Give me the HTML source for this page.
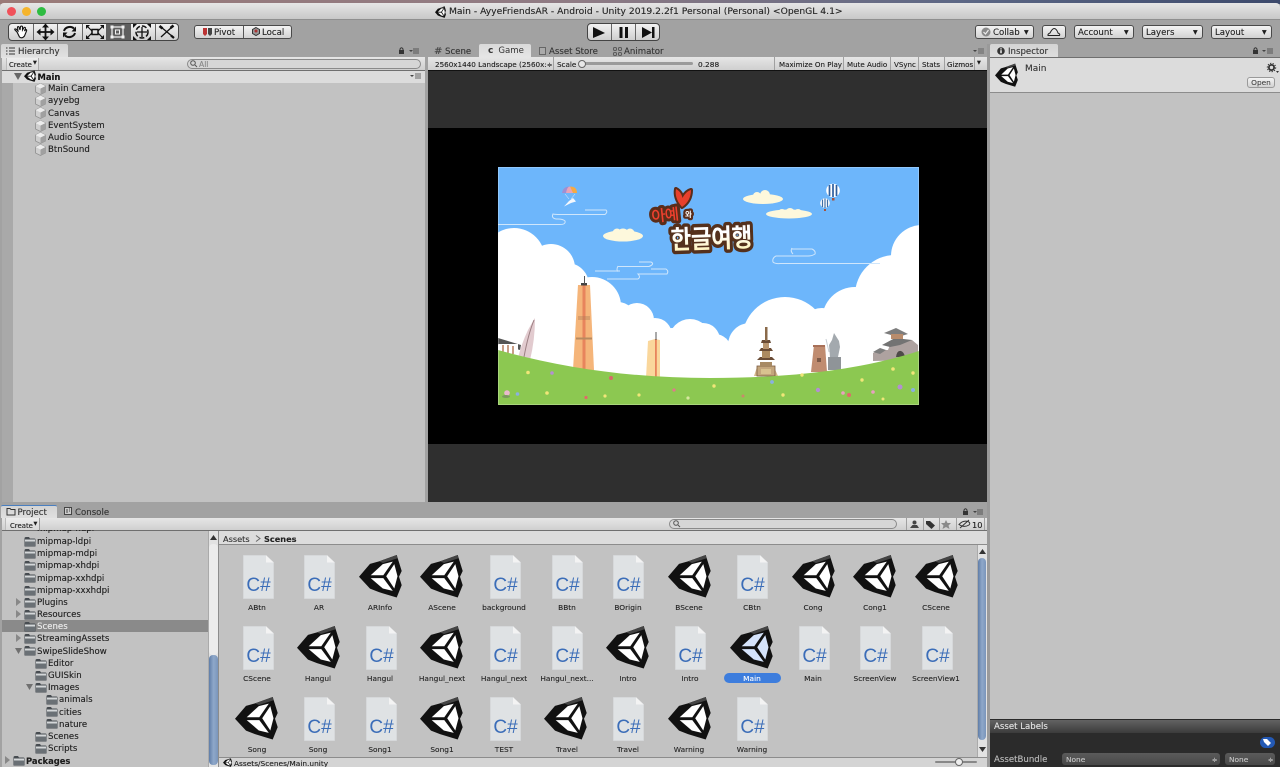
<!DOCTYPE html>
<html><head><meta charset="utf-8"><title>Main - AyyeFriendsAR - Unity</title>
<style>
html,body{margin:0;padding:0;width:1280px;height:767px;overflow:hidden;background:#a2a2a2}
#r{position:absolute;left:0;top:0;width:1280px;height:767px;overflow:hidden;background:#a2a2a2;font-family:"DejaVu Sans","Liberation Sans",sans-serif;color:#222;filter:blur(.3px)}
.b{position:absolute;box-sizing:border-box}
.t{position:absolute;white-space:nowrap;font-size:8.6px;line-height:12px;height:12px;color:#1c1c1c;margin-top:1px;-webkit-text-stroke:.12px currentColor}
.c{position:absolute;white-space:nowrap;font-size:7.4px;line-height:10px;color:#222;transform:translateX(-50%);margin-top:1px;-webkit-text-stroke:.1px currentColor}
.bar{background:linear-gradient(#e6e6e6,#cfcfcf);border-bottom:1px solid #6f6f6f}
.btn{position:absolute;box-sizing:border-box;background:linear-gradient(#f4f4f4,#d2d2d2);border:1px solid #4a4a4a;border-radius:3px;font-size:8.6px;line-height:11px;height:13px;color:#222;white-space:nowrap}
.tab{position:absolute;top:44px;height:14px;background:linear-gradient(#d4d4d4,#e2e2e2);border-radius:2px 2px 0 0;font-size:8.6px;line-height:15px;color:#333;box-sizing:border-box}
.tn{position:absolute;top:45px;font-size:8.6px;line-height:14px;color:#333;white-space:nowrap;-webkit-text-stroke:.12px currentColor}
.sep{position:absolute;width:1px;background:#a0a0a0}
svg{position:absolute;overflow:visible}
</style></head><body><div id="r">
<svg width="0" height="0" style="left:0;top:0"><defs>
<symbol id="u" viewBox="0 0 43 41.500" preserveAspectRatio="none"><path fill="#111" d="M0 21.500L11 9.300 20 7 37.700 1 42.700 16 40 21.500 42.700 29.300 37.700 41 20 36 11 32.700Z"/><path fill="#444" d="M20 7L37.700 1 38.500 4 24 8.500Z"/><path fill="#fff" d="M11.700 20L23.800 9.500 33.800 7.200 24.300 20ZM11.700 22.700H24.300L33.800 34.800 23.800 32.500ZM35.300 9.500L38.500 21 35.300 32.500 27.200 21Z"/></symbol>
<symbol id="us" viewBox="0 0 43 41.500" preserveAspectRatio="none"><path fill="#111" d="M0 21.500L11 9.300 20 7 37.700 1 42.700 16 40 21.500 42.700 29.300 37.700 41 20 36 11 32.700Z"/><path fill="#444" d="M20 7L37.700 1 38.500 4 24 8.500Z"/><path fill="#d5e3fb" d="M11.700 20L23.800 9.500 33.800 7.200 24.300 20ZM11.700 22.700H24.300L33.800 34.800 23.800 32.500ZM35.300 9.500L38.500 21 35.300 32.500 27.200 21Z"/></symbol>
<symbol id="d" viewBox="0 0 31 44"><path fill="#dfe2e4" stroke="#d0d2d4" stroke-width=".6" d="M.3.3H23L30.700 7.500V43.700H.3Z"/><path fill="#f3f3f3" d="M23 .3V7.500H30.700Z"/></symbol>
<symbol id="f" viewBox="0 0 12 11"><path fill="#474c51" d="M.5 2.500Q.5 1 2 1H5L6 2.500H10.500Q11.500 2.500 11.500 3.500V10.500H.5Z"/><path fill="#d4d7d9" d="M1 3.500H11V5.500H1Z"/><path fill="#6a7075" d="M1 5.500H11V10H1Z"/></symbol>
<symbol id="g" viewBox="0 0 10 11"><path fill="#cfcfcf" stroke="#8c8c8c" stroke-width=".7" d="M5 .5L9.500 2.700V8.300L5 10.500 .5 8.300V2.700Z"/><path fill="#a0a0a0" d="M5 5L9.500 2.700V8.300L5 10.500Z"/><path fill="#ececec" d="M5 .5L9.500 2.700 5 5 .5 2.700Z"/></symbol>
<linearGradient id="lg" x1="0" y1="0" x2="0" y2="1"><stop offset=".45" stop-color="#fff"/><stop offset="1" stop-color="#fff0a8"/></linearGradient>
</defs></svg>

<!-- desktop strip and title bar -->
<div class="b" style="left:0;top:0;width:1280px;height:4px;background:linear-gradient(90deg,#9a7a78 0,#8f7b84 45%,#5c6785 75%,#3d4a6c 100%)"></div>
<div class="b" style="left:0;top:3px;width:1280px;height:17px;background:linear-gradient(#e6e6e6,#c8c8c8);border-radius:4px 4px 0 0;border-bottom:1px solid #8f8f8f"></div>
<div class="b" style="left:7px;top:7px;width:9px;height:9px;border-radius:50%;background:#f0515a"></div>
<div class="b" style="left:22px;top:7px;width:9px;height:9px;border-radius:50%;background:#f5b42c"></div>
<div class="b" style="left:37px;top:7px;width:9px;height:9px;border-radius:50%;background:#2ebc41"></div>
<svg style="left:435px;top:6px" width="11" height="12"><use href="#u" width="11" height="12"/></svg>
<div class="t" style="left:449px;top:5px;font-size:9.2px;color:#222">Main - AyyeFriendsAR - Android - Unity 2019.2.2f1 Personal (Personal) &lt;OpenGL 4.1&gt;</div>

<!-- tool buttons -->
<div class="b" style="left:8px;top:23px;width:171px;height:18px;border:1px solid #444;border-radius:4px;background:linear-gradient(#f2f2f2,#cfcfcf)"></div>
<div class="b" style="left:106px;top:24px;width:25px;height:16px;background:#5e5e5e"></div>
<div class="sep" style="left:33px;top:24px;height:16px;background:#666"></div><div class="sep" style="left:57px;top:24px;height:16px;background:#666"></div><div class="sep" style="left:82px;top:24px;height:16px;background:#666"></div><div class="sep" style="left:155px;top:24px;height:16px;background:#666"></div>
<svg style="left:8px;top:23px" width="172" height="18" fill="none" stroke="#111">
<path stroke-width="1.100" fill="#fff" d="M9 9L7 7Q6 5.500 8 6L10 8 9.500 4Q10 3 11 4L12 7 12.500 3.500Q13.500 2.500 14.500 3.500L14.500 7 16 4.500Q17 4 17.500 5L16.500 8 18 6.500Q19 6.500 18.500 8L16.500 13Q14 16 11.500 14Z"/>
<path stroke-width="1.800" d="M30 9H45M37.500 2V16"/><path fill="#111" stroke="none" d="M37.500 0.500L41 4.500H34ZM37.500 17.500L41 13.500H34ZM28.500 9L32.500 5.500V12.500ZM46.500 9L42.500 5.500V12.500Z"/>
<path stroke-width="2" d="M56 8A6 5.500 0 0 1 66 5.500M67 10A6 5.500 0 0 1 57 12.500"/><path fill="#111" stroke="none" d="M68 3.500V8.500H63.500ZM55 14.500V9.500H59.500Z"/>
<path stroke-width="1.200" d="M79 3L84 8M95 3L90 8M79 15L84 10M95 15L90 10"/><rect x="84" y="6.500" width="6" height="5" stroke-width="1.500"/><path fill="#111" stroke="none" d="M78 2H82L78 6ZM96 2H92L96 6ZM78 16H82L78 12ZM96 16H92L96 12Z"/>
<rect x="104" y="4" width="11" height="10" stroke="#f2f2f2" stroke-width="1.200"/><rect x="102.500" y="2.500" width="3" height="3" fill="#f2f2f2" stroke="none"/><rect x="113.500" y="2.500" width="3" height="3" fill="#f2f2f2" stroke="none"/><rect x="102.500" y="12.500" width="3" height="3" fill="#f2f2f2" stroke="none"/><rect x="113.500" y="12.500" width="3" height="3" fill="#f2f2f2" stroke="none"/><rect x="107.500" y="7" width="4" height="4" stroke="#f2f2f2"/>
<circle cx="134" cy="9" r="6" stroke-width="1.500" stroke-dasharray="5 2"/><path stroke-width="1.300" d="M129 9H139M134 4V14"/><path fill="#111" stroke="none" d="M125 1H129L125 5ZM143 1H139L143 5ZM125 17H129L125 13ZM143 17H139L143 13Z"/>
<path stroke-width="1.300" d="M153 4L165 14M164 4L153 14"/><path stroke-width="2.600" d="M151.500 3L154.500 5.500M162.500 5L165.500 2.500"/><path stroke-width="2.200" d="M163 12.500L166 15"/>
</svg>
<!-- pivot/local -->
<div class="btn" style="left:194px;top:25px;width:98px;height:14px;border-radius:3px"></div>
<div class="sep" style="left:243px;top:26px;height:12px;background:#555"></div>
<svg style="left:203px;top:28px" width="9" height="8"><path fill="#b33" d="M0 0H4V6L2 8 0 6Z"/><path fill="#444" d="M5 0H9V6L7 8 5 6Z"/></svg>
<div class="t" style="left:214px;top:25.500px;color:#222">Pivot</div>
<svg style="left:252px;top:27px" width="8" height="9"><path fill="#999" stroke="#333" d="M4 .5L7.500 2.500V6.500L4 8.500 .5 6.500V2.500Z"/><circle cx="4" cy="4" r="1.500" fill="#a33"/></svg>
<div class="t" style="left:262px;top:25.500px;color:#222">Local</div>
<!-- play -->
<div class="b" style="left:587px;top:23px;width:73px;height:18px;border:1px solid #444;border-radius:4px;background:linear-gradient(#f2f2f2,#cfcfcf)"></div>
<div class="sep" style="left:611px;top:24px;height:16px;background:#666"></div><div class="sep" style="left:635px;top:24px;height:16px;background:#666"></div>
<svg style="left:587px;top:23px" width="73" height="18" fill="#111"><path d="M6 4L18 10 6 15Z"/><rect x="32.500" y="4" width="3" height="11"/><rect x="38" y="4" width="3" height="11"/><path d="M55 4L65 9.500 55 15Z"/><rect x="65" y="4" width="2.500" height="11"/></svg>
<!-- right top buttons -->
<div class="btn" style="left:975px;top:25px;width:59px;height:14px"></div>
<svg style="left:981px;top:27px" width="10" height="10"><circle cx="5" cy="5" r="4.500" fill="#8a8a8a"/><path d="M2.500 5L4.500 7 7.500 3" fill="none" stroke="#eee" stroke-width="1.200"/></svg>
<div class="t" style="left:993px;top:25.500px;color:#222">Collab</div><div class="t" style="left:1024px;top:25.500px;font-size:6px">▼</div>
<div class="btn" style="left:1042px;top:25px;width:24px;height:14px"></div>
<svg style="left:1047px;top:28px" width="14" height="8"><path fill="none" stroke="#222" d="M1 7.500H12.500Q13.500 6 11 5Q9.500 .5 7 .5Q5 1 3 5Q.5 6 1 7.500Z"/></svg>
<div class="btn" style="left:1074px;top:25px;width:60px;height:14px"></div><div class="t" style="left:1078px;top:25.500px;color:#222">Account</div><div class="t" style="left:1124px;top:25.500px;font-size:6px">▼</div>
<div class="btn" style="left:1142px;top:25px;width:61px;height:14px"></div><div class="t" style="left:1146px;top:25.500px;color:#222">Layers</div><div class="t" style="left:1193px;top:25.500px;font-size:6px">▼</div>
<div class="btn" style="left:1211px;top:25px;width:61px;height:14px"></div><div class="t" style="left:1215px;top:25.500px;color:#222">Layout</div><div class="t" style="left:1262px;top:25.500px;font-size:6px">▼</div>

<!-- hierarchy -->
<div class="tab" style="left:1px;width:67px"></div>
<svg style="left:6px;top:47px" width="9" height="8" stroke="#333"><path d="M3 1H9M3 4H9M3 7H9M0 1H1.500M0 4H1.500M0 7H1.500"/></svg>
<div class="t" style="left:18px;top:45px;color:#333">Hierarchy</div>
<svg style="left:399px;top:47px" width="20" height="8"><rect x="0" y="3" width="5" height="4" fill="#333"/><path d="M1 3V2Q2.500 -.5 4 2V3" fill="none" stroke="#333"/><path d="M10 3H14L12 5Z" fill="#444"/><path d="M14 2H20M14 4H20M14 6H20" stroke="#555"/></svg>
<div class="b bar" style="left:2px;top:57px;width:423px;height:14px"></div>
<div class="b" style="left:6px;top:58px;width:33px;height:12px;border-right:1px solid #aaa;border-left:1px solid #bbb;background:linear-gradient(#eee,#d8d8d8)"></div>
<div class="t" style="left:9px;top:57.500px;font-size:6.900px">Create</div><div class="t" style="left:33px;top:56px;font-size:5px">▼</div>
<div class="b" style="left:187px;top:59px;width:234px;height:10px;border:1px solid #8a8a8a;border-radius:5px;background:#d6d6d6"></div>
<svg style="left:190px;top:60px" width="9" height="8" fill="none" stroke="#555"><circle cx="3" cy="3" r="2.300"/><path d="M5 5L7 7"/></svg>
<div class="t" style="left:199px;top:57.500px;font-size:7.600px;color:#888">All</div>
<div class="b" style="left:2px;top:71px;width:423px;height:431px;background:#c2c2c2"></div>
<div class="b" style="left:2px;top:82px;width:11px;height:420px;background:#a9a9a9"></div>
<div class="b" style="left:2px;top:71px;width:423px;height:12px;background:#dcdcdc"></div>
<svg style="left:14px;top:73px" width="8" height="7"><path d="M0 0H8L4 7Z" fill="#666"/></svg>
<svg style="left:24px;top:70px" width="12" height="12"><use href="#u" width="12" height="12"/></svg>
<div class="t" style="left:37.500px;top:69.500px;font-weight:bold;font-size:8.400px;color:#111">Main</div>
<svg style="left:410px;top:73px" width="12" height="7"><path d="M0 2H4L2 4Z" fill="#444"/><path d="M5 1H11M5 3H11M5 5H11" stroke="#666"/></svg>
<svg style="left:35px;top:83px" width="11" height="74"><use href="#g" y="0" width="11" height="12"/><use href="#g" y="12" width="11" height="12"/><use href="#g" y="24" width="11" height="12"/><use href="#g" y="37" width="11" height="12"/><use href="#g" y="49" width="11" height="12"/><use href="#g" y="61" width="11" height="12"/></svg>
<div class="t" style="left:48px;top:82px">Main Camera</div>
<div class="t" style="left:48px;top:94px">ayyebg</div>
<div class="t" style="left:48px;top:106.500px">Canvas</div>
<div class="t" style="left:48px;top:119px">EventSystem</div>
<div class="t" style="left:48px;top:131px">Audio Source</div>
<div class="t" style="left:48px;top:143px">BtnSound</div>

<!-- center tabs -->
<div class="tn" style="left:434px"><span style="font-size:10px;line-height:10px;color:#444">#</span></div><div class="tn" style="left:445px">Scene</div>
<div class="tab" style="left:479px;width:52px;padding-left:9px;background:linear-gradient(#dadada,#e6e6e6)"><b style="font-size:9px;color:#333">c</b><span style="margin-left:5px">Game</span></div>
<div class="b" style="left:539px;top:47px;width:7px;height:8px;border:1px solid #666;background:#aaa"></div><div class="tn" style="left:549px">Asset Store</div>
<svg style="left:613px;top:47px" width="9" height="9" fill="#999" stroke="#444" stroke-width=".7"><circle cx="2" cy="2" r="1.700"/><circle cx="7" cy="2" r="1.700"/><circle cx="2" cy="7" r="1.700"/><circle cx="7" cy="7" r="1.700"/></svg><div class="tn" style="left:624px">Animator</div>
<svg style="left:973px;top:48px" width="11" height="7"><path d="M0 2H4L2 4Z" fill="#444"/><path d="M5 1H11M5 3H11M5 5H11" stroke="#666"/></svg>
<div class="b bar" style="left:428px;top:57px;width:559px;height:13px;border-bottom:none"></div>
<div class="t" style="left:435px;top:57.500px;font-size:7.200px">2560x1440 Landscape (2560x:</div><div class="t" style="left:547px;top:57.500px;font-size:6.500px">≑</div>
<div class="sep" style="left:553px;top:57px;height:13px"></div>
<div class="t" style="left:557px;top:57.500px;font-size:7.200px">Scale</div>
<div class="b" style="left:583px;top:62px;width:110px;height:3px;background:#9a9a9a;border-radius:2px"></div>
<div class="b" style="left:578px;top:60px;width:8px;height:8px;border-radius:50%;border:1px solid #666;background:#e8e8e8"></div>
<div class="t" style="left:698px;top:57.500px;font-size:7.400px">0.288</div>
<div class="sep" style="left:774px;top:57px;height:13px"></div><div class="t" style="left:779px;top:57.500px;font-size:7.100px">Maximize On Play</div>
<div class="sep" style="left:843px;top:57px;height:13px"></div><div class="t" style="left:847px;top:57.500px;font-size:7.100px">Mute Audio</div>
<div class="sep" style="left:890px;top:57px;height:13px"></div><div class="t" style="left:894px;top:57.500px;font-size:7.100px">VSync</div>
<div class="sep" style="left:918px;top:57px;height:13px"></div><div class="t" style="left:922px;top:57.500px;font-size:7.100px">Stats</div>
<div class="sep" style="left:944px;top:57px;height:13px"></div><div class="t" style="left:947px;top:57.500px;font-size:7.100px">Gizmos</div>
<div class="sep" style="left:974px;top:57px;height:13px"></div><div class="t" style="left:977px;top:56px;font-size:5px">▼</div>

<!-- game view -->
<div class="b" style="left:428px;top:70px;width:559px;height:432px;background:#2f2f2f;border-top:1px solid #111"></div>
<div class="b" style="left:428px;top:128px;width:559px;height:316px;background:#000"></div>
<svg style="left:0;top:0" width="1280" height="767" viewBox="0 0 1280 767">
<defs><clipPath id="cp"><rect x="498" y="167" width="421" height="238"/></clipPath></defs>
<g clip-path="url(#cp)">
<rect x="498" y="167" width="421" height="238" fill="#6db6fb"/>
<g fill="#fff"><circle cx="514" cy="259" r="31"/><circle cx="535" cy="268" r="22"/><circle cx="551" cy="268" r="24"/><circle cx="567" cy="285" r="22"/><circle cx="592" cy="306" r="29"/><circle cx="618" cy="320" r="18"/><circle cx="637" cy="320" r="17"/><circle cx="655" cy="335" r="17"/><circle cx="672" cy="342" r="14"/><circle cx="690" cy="340" r="21"/><circle cx="703" cy="340" r="17"/><circle cx="715" cy="350" r="16"/><circle cx="750" cy="345" r="22"/><circle cx="785" cy="340" r="43"/><circle cx="822" cy="330" r="22"/><circle cx="855" cy="320" r="33"/><circle cx="895" cy="295" r="40"/><circle cx="922" cy="256" r="31"/>
<path d="M498 250L540 262 570 290 600 310 640 335 700 345 722 348 780 330 850 310 885 290 919 250V380H498Z"/></g>
<g fill="none" stroke="#cfe6fb" stroke-width="1"><path d="M498 224.500H560Q566 224.500 565 221Q563 219 558 219H556Q551 218 553 214Q555 214.500 560 214.500H605Q608 212 606 210H585"/><path d="M595 271H620M618 266.500H649Q655 264 651 262H639M618 266Q616 270 618 271.500M630 279H638Q641 277 638 274H667Q669 271 666 269H651M607 279H638"/><path d="M792 249H812Q816 251 815 254Q812 256 808 256H776Q772 258 773 262Q775 264 780 263.500H880M792 248Q790 251 793 254"/></g>
<g fill="#fdf8dc"><ellipse cx="623" cy="236" rx="20" ry="5.500"/><circle cx="617" cy="233" r="4.500"/><circle cx="623" cy="235" r="6.500"/><circle cx="630" cy="233" r="4.500"/>
<ellipse cx="763" cy="199" rx="20" ry="5"/><circle cx="757" cy="196" r="4"/><circle cx="765" cy="195" r="5"/><ellipse cx="789" cy="214" rx="23" ry="4.500"/><circle cx="782" cy="213" r="4"/><circle cx="790" cy="213" r="5"/><circle cx="798" cy="213" r="4"/></g>
<!-- balloons -->
<circle cx="833" cy="190.500" r="6.800" fill="#fff"/><path d="M829.500 185V196M833 184V197M836.500 185V196" stroke="#2e5f9f" stroke-width="1.700"/><rect x="832" y="198" width="2.500" height="2.500" fill="#a5533c"/>
<circle cx="825" cy="203" r="4.800" fill="#fff"/><path d="M822.500 199.500V207M825 198.500V208M827.500 199.500V207" stroke="#3f6ea6" stroke-width="1.200"/><rect x="824" y="209" width="2" height="2" fill="#a5533c"/>
<path d="M562 193Q563 186.500 570 186.500V193Z" fill="#9f8fd2"/><path d="M566 193Q567 186.500 570 186.500L574 193Z" fill="#e9a4b8"/><path d="M570 186.500Q577 186.500 577 193H573Z" fill="#f4aa45"/>
<path d="M564 206.500L569 201 573 198 576 201.500 571 203Z" fill="#f4f8fd"/><path d="M565 194L569 199M575 194L571 199" stroke="#e8f0fb" stroke-width=".5"/>
<!-- hill buildings -->
<path d="M518 358Q521 345 528 330Q533 321 535 318Q535 340 530 360Z" fill="#e2cbcf"/><path d="M524 357Q528 335 534 320" stroke="#9b7e82" fill="none"/>
<path d="M498 338L521 345 520 350 498 344Z" fill="#555"/><rect x="499" y="344" width="19" height="8" fill="#fff"/><path d="M503 345V352M508 345V353M513 346V354" stroke="#a55d35" stroke-width="1.200"/>
<path d="M578 285H590L594 370H573Z" fill="#f5b57a"/><rect x="582.500" y="285" width="3" height="85" fill="#e8845c"/><rect x="581" y="283" width="6" height="2.500" fill="#444"/><rect x="584" y="276" width="1" height="8" fill="#555"/><path d="M578 317H590M578 319H590" stroke="#a77a55" stroke-width=".8"/><path d="M576 338.500H592" stroke="#b88a60" stroke-width="2"/>
<path d="M648 341L655 339 660 340V378H646Z" fill="#fad79c"/><rect x="655" y="339" width="1.800" height="39" fill="#e8845c"/><rect x="655.500" y="332" width="1" height="8" fill="#555"/>
<path d="M754 376L757 367H774L778 376Z" fill="#d6b88c"/><rect x="757" y="366" width="18" height="10" fill="#c4a67d" stroke="#7a5a40" stroke-width=".8"/><rect x="761" y="369" width="10" height="5" fill="#d9c290"/><path d="M760 357H772L775 360H757Z" fill="#6a4c36"/><rect x="762" y="350" width="8" height="8" fill="#ac8a60"/><path d="M761 348H771L773 351H759Z" fill="#6a4c36"/><rect x="763" y="343" width="6" height="6" fill="#b99670"/><path d="M762 340H770L771 343H761Z" fill="#6a4c36"/><rect x="765" y="327" width="2.500" height="14" fill="#8a6a4a"/><rect x="760" y="362" width="12" height="4" fill="#a88a64"/>
<path d="M814 345H825L827 372H811Z" fill="#c08c70"/><rect x="817" y="358" width="4" height="4" fill="#7d5a48"/><rect x="813" y="345" width="12" height="2" fill="#a87058"/>
<rect x="828" y="357" width="13" height="13" fill="#8f9498"/><path d="M834 333L839 341 840 347 838 357H830L829 345 832 340Z" fill="#a3a9ae"/><path d="M826 339L829 352" stroke="#c8cdd2" stroke-width="1"/>
<path d="M873 361V353L882 350H888L892 340H912L918 345V360Z" fill="#aea2a0"/><path d="M884 333L896 328 908 334 898 337Z" fill="#7d7d7d"/><path d="M882 345L895 338 912 340 900 345 890 347Z" fill="#737373"/><path d="M873 352L880 348 886 350 880 354Z" fill="#7d7d7d"/><path d="M896 357Q897 350 901 351 904 352 905 357Z" fill="#4e4a48"/><rect x="891" y="334" width="12" height="5" fill="#b98c6c"/>
<path d="M498 350C570 370 640 378 710 378C790 378 860 370 919 351V405H498Z" fill="#8cc851"/>
<g><circle cx="507" cy="393" r="2.800" fill="#e9b9cc"/><ellipse cx="506" cy="396.500" rx="4" ry="1.500" fill="#7a9a5c"/><circle cx="517.500" cy="394" r="1.800" fill="#8ab0e0"/><circle cx="528" cy="372.500" r="1.800" fill="#f1e678"/><circle cx="552" cy="373" r="1.800" fill="#b48fd2"/><circle cx="547" cy="393" r="1.800" fill="#f1e678"/><circle cx="586" cy="397.500" r="1.600" fill="#e06a6a"/><circle cx="611" cy="378" r="2" fill="#d66a6a"/><circle cx="605" cy="396" r="1.600" fill="#f1e678"/><circle cx="639" cy="395" r="1.600" fill="#f1e678"/><circle cx="674" cy="390" r="1.600" fill="#e07a8a"/><circle cx="688" cy="398" r="1.600" fill="#d8e8a0"/><circle cx="714" cy="386" r="1.700" fill="#f1e678"/><circle cx="743" cy="396" r="1.500" fill="#c98a6a"/><circle cx="772" cy="382" r="1.900" fill="#8ab0e0"/><circle cx="783" cy="395" r="1.700" fill="#f1e678"/><circle cx="802" cy="375" r="1.700" fill="#f1e678"/><circle cx="818" cy="390" r="2.200" fill="#b48fd2"/><circle cx="843" cy="393" r="1.800" fill="#e9a0c0"/><circle cx="849" cy="395" r="2" fill="#e06a6a"/><circle cx="862" cy="380" r="1.700" fill="#f1e678"/><circle cx="873" cy="392" r="1.800" fill="#e9a0c0"/><circle cx="883" cy="399" r="1.500" fill="#f1e678"/><circle cx="893" cy="369" r="1.800" fill="#f1e678"/><circle cx="900" cy="387" r="2.500" fill="#b48fd2"/><circle cx="913" cy="373" r="1.700" fill="#f1e678"/><circle cx="913" cy="390" r="2" fill="#8ab0e0"/></g>
<!-- logo -->
<path d="M682 207C676 200 675 194 676 189C680 191 682 195 682.500 198C684 195 687 191 691 190C691 197 688 203 682 207Z" fill="#e8402c" stroke="#5a2d1a" stroke-width="4" stroke-linejoin="round" paint-order="stroke"/>
<g font-family="'Noto Sans CJK KR','NanumGothic',sans-serif" stroke-linejoin="round">
<text transform="translate(652 222) rotate(-6)" font-size="15.500" font-weight="500" fill="#f0402e" stroke="#5a2d1a" stroke-width="6" paint-order="stroke" style="letter-spacing:-.8px">아예</text>
<text x="685" y="217" font-size="7.500" font-weight="700" fill="#fff" stroke="#5a2d1a" stroke-width="4.500" paint-order="stroke">와</text>
<text transform="translate(671 249) rotate(-2) scale(1 1.150)" font-size="22.500" font-weight="700" fill="url(#lg)" stroke="#54301c" stroke-width="6" paint-order="stroke" style="letter-spacing:-.4px">한글여행</text>
</g>
<rect x="498.500" y="167.500" width="420" height="237" fill="none" stroke="#fff" stroke-opacity=".25"/>
</g></svg>

<!-- inspector -->
<div class="tab" style="left:990px;width:68px;background:linear-gradient(#d4d4d4,#dedede)"></div>
<svg style="left:997px;top:47px" width="8" height="8"><circle cx="4" cy="4" r="3.800" fill="#333"/><rect x="3.300" y="3.200" width="1.400" height="3" fill="#fff"/><rect x="3.300" y="1.300" width="1.400" height="1.200" fill="#fff"/></svg>
<div class="t" style="left:1008px;top:45px;color:#333">Inspector</div>
<svg style="left:1253px;top:47px" width="20" height="8"><rect x="0" y="3" width="5" height="4" fill="#333"/><path d="M1 3V2Q2.500 -.5 4 2V3" fill="none" stroke="#333"/><path d="M9 3H13L11 5Z" fill="#444"/><path d="M14 2H20M14 4H20M14 6H20" stroke="#555"/></svg>
<div class="b" style="left:990px;top:57px;width:290px;height:710px;background:#c2c2c2;border-top:1px solid #6f6f6f"></div>
<div class="b" style="left:990px;top:58px;width:290px;height:35px;background:#dcdcdc;border-bottom:1px solid #8c8c8c"></div>
<svg style="left:995px;top:63px" width="23" height="24"><use href="#u" width="23" height="24"/></svg>
<div class="t" style="left:1025px;top:62px;color:#333;font-size:9px">Main</div>
<svg style="left:1267px;top:63px" width="12" height="10"><circle cx="4.500" cy="4.500" r="2.600" fill="none" stroke="#333" stroke-width="1.800"/><circle cx="4.500" cy="4.500" r="4.200" fill="none" stroke="#333" stroke-width="1" stroke-dasharray="1.300 1.300"/><path d="M9 8H12L10.500 10Z" fill="#333"/></svg>
<div class="btn" style="left:1247px;top:77px;width:28px;height:11px;font-size:7.400px;line-height:10.500px;text-align:center;border-color:#9a9a9a;color:#333">Open</div>
<div class="b" style="left:990px;top:719px;width:290px;height:14px;background:linear-gradient(#636363,#3c3c3c);border-top:1px solid #2a2a2a"></div>
<div class="t" style="left:994px;top:720px;color:#e4e4e4;font-size:8.600px">Asset Labels</div>
<div class="b" style="left:990px;top:733px;width:290px;height:34px;background:#2b2b2b"></div>
<div class="b" style="left:1260px;top:737px;width:15px;height:11px;border-radius:6px;background:#2359b5"></div>
<svg style="left:1263px;top:738px" width="9" height="9"><path d="M0 1H4L8 5 5 8 1 4Z" fill="#fff"/></svg>
<div class="t" style="left:994px;top:753px;color:#bdbdbd;font-size:8.600px">AssetBundle</div>
<div class="b" style="left:1062px;top:753px;width:158px;height:12px;background:linear-gradient(#5a5a5a,#484848);border-radius:3px"></div><div class="t" style="left:1066px;top:752.500px;color:#c8c8c8;font-size:7.400px">None</div><div class="t" style="left:1212px;top:752.500px;color:#c8c8c8;font-size:6.500px">≑</div>
<div class="b" style="left:1225px;top:753px;width:50px;height:12px;background:linear-gradient(#5a5a5a,#484848);border-radius:3px"></div><div class="t" style="left:1229px;top:752.500px;color:#c8c8c8;font-size:7.400px">None</div><div class="t" style="left:1268px;top:752.500px;color:#c8c8c8;font-size:6.500px">≑</div>
<div class="b" style="left:987px;top:44px;width:3px;height:723px;background:#9a9a9a"></div>

<!-- project panel -->
<div class="b" style="left:0;top:502px;width:987px;height:3px;background:#a2a2a2"></div>
<div class="b" style="left:0;top:505px;width:987px;height:13px;background:#a2a2a2"></div>
<div class="tab" style="left:1px;top:505px;width:56px;height:13px;border-top:1px solid #4a7fc0;background:linear-gradient(#d4d4d4,#e0e0e0)"></div>
<svg style="left:7px;top:507px" width="8" height="8"><path d="M0 1.500H3L4 2.500H8V8H0Z" fill="none" stroke="#333"/></svg>
<div class="t" style="left:17.500px;top:506px;color:#333">Project</div>
<svg style="left:64px;top:507px" width="8" height="8"><rect x=".5" y=".5" width="7" height="7" fill="#ccc" stroke="#444"/><path d="M3 2V6M5 2H6M5 4H6" stroke="#444"/></svg>
<div class="t" style="left:75px;top:506px;color:#333">Console</div>
<svg style="left:963px;top:508px" width="20" height="8"><rect x="0" y="3" width="5" height="4" fill="#333"/><path d="M1 3V2Q2.500 -.5 4 2V3" fill="none" stroke="#333"/><path d="M10 3H14L12 5Z" fill="#444"/><path d="M14 2H20M14 4H20M14 6H20" stroke="#555"/></svg>
<div class="b bar" style="left:2px;top:518px;width:985px;height:13px"></div>
<div class="b" style="left:5px;top:518px;width:35px;height:12px;background:linear-gradient(#eee,#d8d8d8);border-right:1px solid #999;border-left:1px solid #bbb"></div>
<div class="t" style="left:10px;top:518.500px;font-size:6.900px">Create</div><div class="t" style="left:33.500px;top:517px;font-size:5px">▼</div>
<div class="b" style="left:669px;top:519px;width:228px;height:10px;border:1px solid #8a8a8a;border-radius:5px;background:#d6d6d6"></div>
<svg style="left:673px;top:520px" width="9" height="8" fill="none" stroke="#555"><circle cx="3" cy="3" r="2.300"/><path d="M5 5L7 7"/></svg>
<div class="sep" style="left:906px;top:518px;height:12px"></div><div class="sep" style="left:923px;top:518px;height:12px"></div><div class="sep" style="left:939px;top:518px;height:12px"></div><div class="sep" style="left:956px;top:518px;height:12px"></div><div class="sep" style="left:984px;top:518px;height:12px"></div>
<svg style="left:909px;top:520px" width="75" height="9"><circle cx="5.500" cy="2.500" r="2" fill="#444"/><path d="M1 8L3.500 5H8L10 8Z" fill="#444"/><path d="M17 1H21L26 5.500 22.500 9 17 4Z" fill="#333"/><path d="M37 0L38.500 3H42L39.500 5.500 40.500 9 37 7 33.500 9 34.500 5.500 32 3H35.500Z" fill="#8a8a8a"/><path d="M50 4.500Q54 0 59 1.500Q62 3 60 5Q55 8 50 4.500ZM51 8L60 0" fill="none" stroke="#333"/></svg>
<div class="t" style="left:972px;top:517.500px;font-size:8.200px">10</div>

<!-- tree -->
<div class="b" style="left:2px;top:531px;width:206px;height:236px;background:#c2c2c2"></div>
<div class="b" style="left:2px;top:620px;width:206px;height:12px;background:#8a8a8a"></div>
<svg style="left:0;top:0" width="240" height="767">
<use href="#f" x="24" y="536" width="12" height="11"/><use href="#f" x="24" y="548" width="12" height="11"/><use href="#f" x="24" y="560" width="12" height="11"/><use href="#f" x="24" y="572" width="12" height="11"/><use href="#f" x="24" y="585" width="12" height="11"/><use href="#f" x="24" y="597" width="12" height="11"/><use href="#f" x="24" y="609" width="12" height="11"/><use href="#f" x="24" y="621" width="12" height="11"/><use href="#f" x="24" y="633" width="12" height="11"/><use href="#f" x="24" y="645" width="12" height="11"/>
<use href="#f" x="35" y="658" width="12" height="11"/><use href="#f" x="35" y="670" width="12" height="11"/><use href="#f" x="35" y="682" width="12" height="11"/><use href="#f" x="46" y="694" width="12" height="11"/><use href="#f" x="46" y="706" width="12" height="11"/><use href="#f" x="46" y="718" width="12" height="11"/><use href="#f" x="35" y="731" width="12" height="11"/><use href="#f" x="35" y="743" width="12" height="11"/><use href="#f" x="13" y="755" width="12" height="11"/>
<g fill="#888"><path d="M16 598L21 602 16 606ZM16 610L21 614 16 618ZM16 634L21 638 16 642ZM5 756L10 760 5 764Z"/></g><g fill="#707070"><path d="M15 648H22L18.500 654ZM26 684H33L29.500 690Z"/></g>
</svg>
<div class="t" style="left:37px;top:522px;line-height:12px;clip-path:inset(7px 0 0 0);height:12px">mipmap-hdpi</div>
<div class="t" style="left:37px;top:535px">mipmap-ldpi</div>
<div class="t" style="left:37px;top:547px">mipmap-mdpi</div>
<div class="t" style="left:37px;top:559px">mipmap-xhdpi</div>
<div class="t" style="left:37px;top:571.500px">mipmap-xxhdpi</div>
<div class="t" style="left:37px;top:584px">mipmap-xxxhdpi</div>
<div class="t" style="left:37px;top:596px">Plugins</div>
<div class="t" style="left:37px;top:608px">Resources</div>
<div class="t" style="left:37px;top:620px;color:#eee">Scenes</div>
<div class="t" style="left:37px;top:632px">StreamingAssets</div>
<div class="t" style="left:37px;top:644.500px">SwipeSlideShow</div>
<div class="t" style="left:48px;top:657px">Editor</div>
<div class="t" style="left:48px;top:669px">GUISkin</div>
<div class="t" style="left:48px;top:681px">Images</div>
<div class="t" style="left:59px;top:693px">animals</div>
<div class="t" style="left:59px;top:705.500px">cities</div>
<div class="t" style="left:59px;top:717.500px">nature</div>
<div class="t" style="left:48px;top:730px">Scenes</div>
<div class="t" style="left:48px;top:742px">Scripts</div>
<div class="t" style="left:26px;top:754px;font-weight:bold;font-size:8.400px">Packages</div>
<!-- tree scrollbar -->
<div class="b" style="left:208px;top:531px;width:11px;height:236px;background:#e2e2e2;border-left:1px solid #aaa;border-right:1px solid #8c8c8c"></div>
<svg style="left:210px;top:535px" width="7" height="6"><path d="M0 5H7L3.500 0Z" fill="#333"/></svg>
<svg style="left:210px;top:760px" width="7" height="6"><path d="M0 0H7L3.500 5Z" fill="#333"/></svg>
<div class="b" style="left:209px;top:544px;width:9px;height:111px;background:#ececec;border-radius:4px"></div>
<div class="b" style="left:209px;top:655px;width:9px;height:110px;background:linear-gradient(90deg,#5f7da8,#8fa8c9 50%,#7a95bb);border-radius:4px"></div>

<!-- grid -->
<div class="b" style="left:219px;top:531px;width:768px;height:236px;background:#c2c2c2"></div>
<div class="b" style="left:219px;top:531px;width:768px;height:14px;background:#dcdcdc;border-bottom:1px solid #8c8c8c"></div>
<div class="t" style="left:223px;top:531.500px;font-size:8.200px;color:#333">Assets</div>
<svg style="left:255px;top:535px" width="6" height="7"><path d="M1 .5L5 3.500 1 6.500" fill="none" stroke="#666"/></svg>
<div class="t" style="left:264px;top:531.500px;font-size:8.200px;font-weight:bold;color:#222">Scenes</div>
<div class="b" style="left:977px;top:545px;width:10px;height:212px;background:#e2e2e2;border-left:1px solid #aaa"></div>
<svg style="left:979px;top:549px" width="7" height="5"><path d="M0 5H7L3.500 0Z" fill="#333"/></svg>
<svg style="left:979px;top:747px" width="7" height="5"><path d="M0 0H7L3.500 5Z" fill="#333"/></svg>
<div class="b" style="left:978px;top:558px;width:8px;height:182px;background:linear-gradient(90deg,#5f7da8,#8fa8c9 50%,#7a95bb);border-radius:4px"></div>
<div class="b" style="left:219px;top:757px;width:768px;height:10px;background:#d4d4d4;border-top:1px solid #8c8c8c"></div>
<svg style="left:223px;top:758px" width="9" height="9"><use href="#u" width="9" height="9"/></svg>
<div class="t" style="left:234px;top:756.500px;font-size:7.400px;line-height:11px">Assets/Scenes/Main.unity</div>
<div class="b" style="left:935px;top:761px;width:42px;height:2px;background:#888;border-radius:1px"></div>
<div class="b" style="left:955px;top:758px;width:8px;height:8px;border-radius:50%;border:1px solid #666;background:#eee"></div>

<svg style="left:0;top:0" width="1280" height="767" font-family="'Liberation Sans',sans-serif" font-size="19" fill="#3b6db8">
<g>
<use href="#d" x="243" y="555" width="31" height="44"/><text x="258.500" y="591" text-anchor="middle">C#</text>
<use href="#d" x="304" y="555" width="31" height="44"/><text x="319.500" y="591" text-anchor="middle">C#</text>
<use href="#u" x="359" y="554" width="43" height="44"/>
<use href="#u" x="420" y="554" width="43" height="44"/>
<use href="#d" x="490" y="555" width="31" height="44"/><text x="505.500" y="591" text-anchor="middle">C#</text>
<use href="#d" x="552" y="555" width="31" height="44"/><text x="567.500" y="591" text-anchor="middle">C#</text>
<use href="#d" x="613" y="555" width="31" height="44"/><text x="628.500" y="591" text-anchor="middle">C#</text>
<use href="#u" x="668" y="554" width="43" height="44"/>
<use href="#d" x="737" y="555" width="31" height="44"/><text x="752.500" y="591" text-anchor="middle">C#</text>
<use href="#u" x="792" y="554" width="43" height="44"/>
<use href="#u" x="853" y="554" width="43" height="44"/>
<use href="#u" x="915" y="554" width="43" height="44"/>

<use href="#d" x="243" y="626" width="31" height="44"/><text x="258.500" y="662" text-anchor="middle">C#</text>
<use href="#u" x="297" y="625" width="43" height="44"/>
<use href="#d" x="366" y="626" width="31" height="44"/><text x="381.500" y="662" text-anchor="middle">C#</text>
<use href="#u" x="420" y="625" width="43" height="44"/>
<use href="#d" x="490" y="626" width="31" height="44"/><text x="505.500" y="662" text-anchor="middle">C#</text>
<use href="#d" x="552" y="626" width="31" height="44"/><text x="567.500" y="662" text-anchor="middle">C#</text>
<use href="#u" x="606" y="625" width="43" height="44"/>
<use href="#d" x="675" y="626" width="31" height="44"/><text x="690.500" y="662" text-anchor="middle">C#</text>
<use href="#us" x="730" y="625" width="43" height="44"/>
<use href="#d" x="799" y="626" width="31" height="44"/><text x="814.500" y="662" text-anchor="middle">C#</text>
<use href="#d" x="860" y="626" width="31" height="44"/><text x="875.500" y="662" text-anchor="middle">C#</text>
<use href="#d" x="922" y="626" width="31" height="44"/><text x="937.500" y="662" text-anchor="middle">C#</text>

<use href="#u" x="235" y="696" width="43" height="44"/>
<use href="#d" x="304" y="697" width="31" height="44"/><text x="319.500" y="733" text-anchor="middle">C#</text>
<use href="#d" x="366" y="697" width="31" height="44"/><text x="381.500" y="733" text-anchor="middle">C#</text>
<use href="#u" x="420" y="696" width="43" height="44"/>
<use href="#d" x="490" y="697" width="31" height="44"/><text x="505.500" y="733" text-anchor="middle">C#</text>
<use href="#u" x="544" y="696" width="43" height="44"/>
<use href="#d" x="613" y="697" width="31" height="44"/><text x="628.500" y="733" text-anchor="middle">C#</text>
<use href="#u" x="668" y="696" width="43" height="44"/>
<use href="#d" x="737" y="697" width="31" height="44"/><text x="752.500" y="733" text-anchor="middle">C#</text>
</g></svg>

<div class="c" style="left:257px;top:602px">ABtn</div><div class="c" style="left:319px;top:602px">AR</div><div class="c" style="left:380px;top:602px">ARInfo</div><div class="c" style="left:442px;top:602px">AScene</div><div class="c" style="left:504px;top:602px">background</div><div class="c" style="left:567px;top:602px">BBtn</div><div class="c" style="left:628px;top:602px">BOrigin</div><div class="c" style="left:689px;top:602px">BScene</div><div class="c" style="left:752px;top:602px">CBtn</div><div class="c" style="left:813px;top:602px">Cong</div><div class="c" style="left:875px;top:602px">Cong1</div><div class="c" style="left:936px;top:602px">CScene</div>

<div class="b" style="left:724px;top:673px;width:57px;height:10px;border-radius:5px;background:#3d7ddd"></div>
<div class="c" style="left:257px;top:673px">CScene</div><div class="c" style="left:318px;top:673px">Hangul</div><div class="c" style="left:380px;top:673px">Hangul</div><div class="c" style="left:442px;top:673px">Hangul_next</div><div class="c" style="left:504px;top:673px">Hangul_next</div><div class="c" style="left:567px;top:673px">Hangul_next...</div><div class="c" style="left:628px;top:673px">Intro</div><div class="c" style="left:690px;top:673px">Intro</div><div class="c" style="left:752px;top:672.500px;color:#fff">Main</div><div class="c" style="left:813px;top:673px">Main</div><div class="c" style="left:875px;top:673px">ScreenView</div><div class="c" style="left:936px;top:673px">ScreenView1</div>

<div class="c" style="left:257px;top:744px">Song</div><div class="c" style="left:318px;top:744px">Song</div><div class="c" style="left:380px;top:744px">Song1</div><div class="c" style="left:442px;top:744px">Song1</div><div class="c" style="left:504px;top:744px">TEST</div><div class="c" style="left:567px;top:744px">Travel</div><div class="c" style="left:628px;top:744px">Travel</div><div class="c" style="left:689px;top:744px">Warning</div><div class="c" style="left:752px;top:744px">Warning</div>
</div></body></html>
